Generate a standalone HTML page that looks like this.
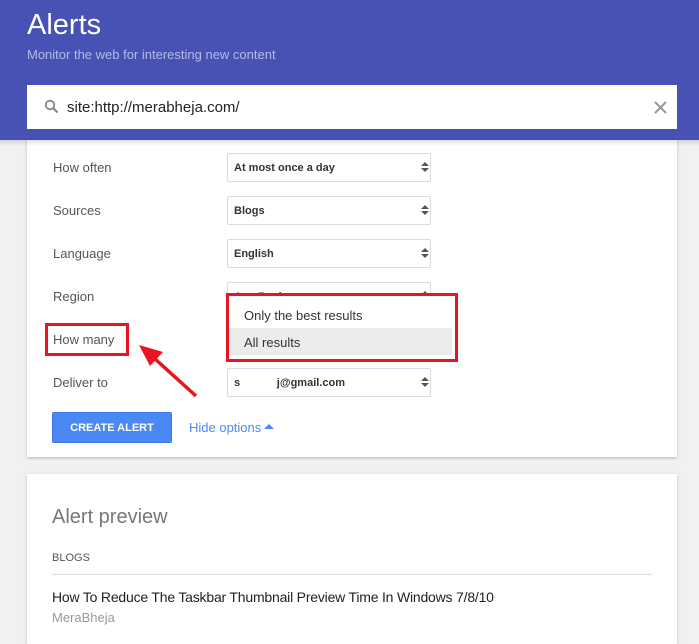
<!DOCTYPE html>
<html><head><style>
*{margin:0;padding:0;box-sizing:border-box}
body{width:699px;height:633px;overflow:hidden;background:#f1f1f1;font-family:"Liberation Sans",sans-serif;position:relative}
.hdr{position:absolute;left:0;top:0;width:699px;height:140px;background:#4752b4}
.t{position:absolute;left:27px;top:9px;color:#fff;font-size:29px;font-weight:300}
.sub{position:absolute;left:27px;top:47px;color:#b5bbe6;font-size:13px}
.search{position:absolute;left:27px;top:85px;width:650px;height:44px;background:#fff}
.card{position:absolute;left:27px;width:650px;background:#fff;box-shadow:0 1px 3px rgba(0,0,0,.25)}
.lbl{position:absolute;left:53px;font-size:13px;color:#555}
.sel{position:absolute;left:227px;width:204px;height:29px;border:1px solid #dadada;border-radius:2px;background:#fff;font-size:11px;font-weight:bold;color:#333;padding:8px 0 0 6px}
.arr{position:absolute;right:5px;top:8px;width:0;height:0}
.arr:before{content:"";position:absolute;left:-4px;top:0;border:4px solid transparent;border-top:0;border-bottom:4px solid #555}
.arr:after{content:"";position:absolute;left:-4px;top:6px;border:4px solid transparent;border-bottom:0;border-top:4px solid #555}
</style></head><body>
<div class="hdr"><div class="t">Alerts</div><div class="sub">Monitor the web for interesting new content</div>
<div class="search">
<svg style="position:absolute;left:17px;top:14px" width="15" height="15" viewBox="0 0 15 15"><circle cx="6" cy="6" r="4.3" fill="none" stroke="#888" stroke-width="1.8"/><path d="M9 9l4.5 4.5" stroke="#888" stroke-width="2.2"/></svg>
<div style="position:absolute;left:40px;top:14px;font-size:15px;color:#222">site:http://merabheja.com/</div>
<svg style="position:absolute;left:627px;top:16px" width="13" height="13" viewBox="0 0 13 13"><path d="M1 1l11 11M12 1L1 12" stroke="#999" stroke-width="2"/></svg>
</div></div>
<div class="card" style="top:140px;height:317px;box-shadow:0 1px 3px rgba(0,0,0,.25)"></div>
<div style="position:absolute;left:0;top:140px;width:699px;height:6px;background:linear-gradient(rgba(0,0,0,.12),rgba(0,0,0,0))"></div>
<div class="lbl" style="top:160px">How often</div>
<div class="lbl" style="top:203px">Sources</div>
<div class="lbl" style="top:246px">Language</div>
<div class="lbl" style="top:289px">Region</div>
<div class="lbl" style="top:332px">How many</div>
<div class="lbl" style="top:375px">Deliver to</div>
<div class="sel" style="top:153px">At most once a day<span class="arr"></span></div>
<div class="sel" style="top:196px">Blogs<span class="arr"></span></div>
<div class="sel" style="top:239px">English<span class="arr"></span></div>
<div class="sel" style="top:282px">Any Region<span class="arr"></span></div>
<div class="sel" style="top:368px">s&nbsp;&nbsp;&nbsp;&nbsp;&nbsp;&nbsp;&nbsp;&nbsp;&nbsp;&nbsp;&nbsp;&nbsp;j@gmail.com<span class="arr"></span></div>
<div style="position:absolute;left:226px;top:293px;width:232px;height:69px;border:3px solid #e8141e;background:#fff">
<div style="position:absolute;left:0;top:32px;width:223px;height:27px;background:#ececec"></div>
<div style="position:absolute;left:15px;top:12px;font-size:13px;color:#333">Only the best results</div>
<div style="position:absolute;left:15px;top:39px;font-size:13px;color:#333">All results</div>
</div>
<div style="position:absolute;left:45px;top:323px;width:84px;height:33px;border:3px solid #e8141e"></div>
<svg style="position:absolute;left:0;top:0" width="699" height="633"><path d="M196 396L154 358" stroke="#e8141e" stroke-width="3.5"/><path d="M139 345L163 352L150 366Z" fill="#e8141e"/></svg>
<div style="position:absolute;left:52px;top:412px;width:120px;height:31px;background:#4a89f3;border:1px solid #3b78e7;border-radius:2px;color:#fff;font-size:11px;font-weight:bold;text-align:center;line-height:30px">CREATE ALERT</div>
<div style="position:absolute;left:189px;top:420px;font-size:13px;color:#4a89f3">Hide options</div>
<div style="position:absolute;left:264px;top:424px;border:5px solid transparent;border-top:0;border-bottom:5px solid #4a89f3"></div>
<div class="card" style="top:474px;height:170px"></div>
<div style="position:absolute;left:52px;top:506px;font-size:20px;color:#777;font-weight:300">Alert preview</div>
<div style="position:absolute;left:52px;top:552px;font-size:11px;color:#555">BLOGS</div>
<div style="position:absolute;left:52px;top:574px;width:600px;height:1px;background:#ddd"></div>
<div style="position:absolute;left:52px;top:589px;font-size:14px;color:#222;letter-spacing:-0.2px">How To Reduce The Taskbar Thumbnail Preview Time In Windows 7/8/10</div>
<div style="position:absolute;left:52px;top:610px;font-size:13px;color:#999">MeraBheja</div>
</body></html>
